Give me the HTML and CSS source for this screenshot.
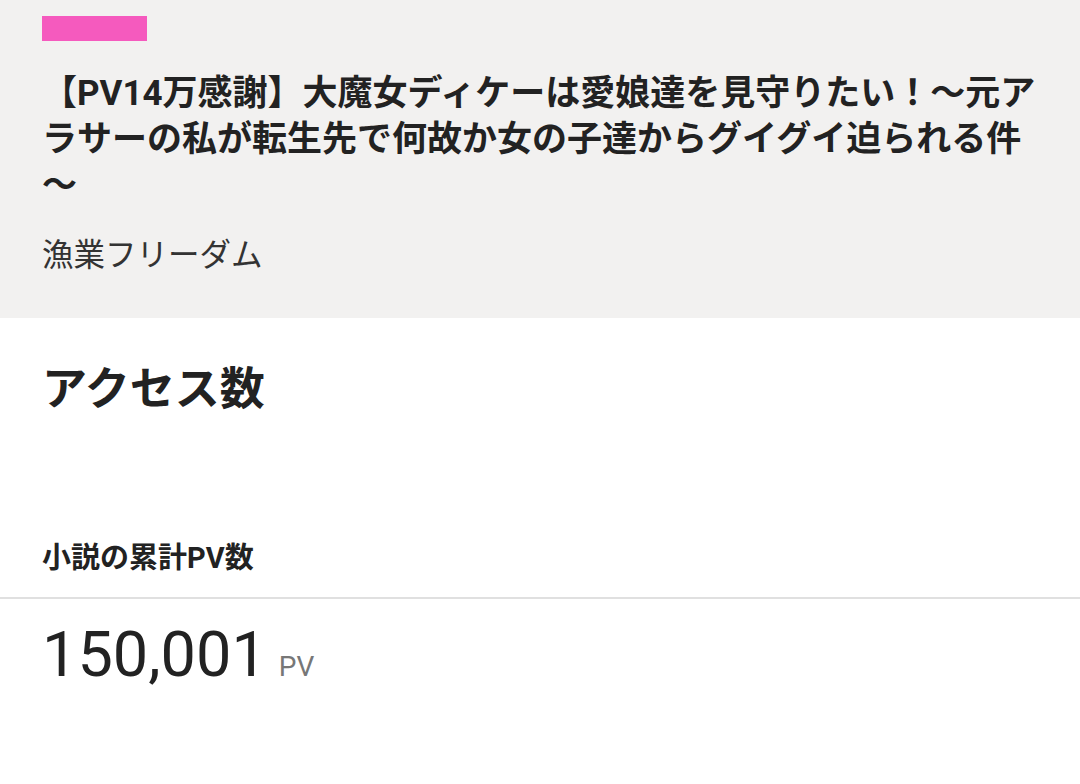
FILE: index.html
```html
<!DOCTYPE html>
<html lang="ja">
<head>
<meta charset="utf-8">
<link rel="stylesheet" href="styles.css">
</head>
<body>
<header class="novel-head">
  <div class="tag-bar"></div>
  <h1 class="novel-title">【PV14万感謝】大魔女ディケーは愛娘達を見守りたい！〜元アラサーの私が転生先で何故か女の子達からグイグイ迫られる件〜</h1>
  <p class="novel-author">漁業フリーダム</p>
</header>
<main class="access">
  <h2 class="access-title">アクセス数</h2>
  <h3 class="stat-label">小説の累計PV数</h3>
  <div class="stat-value"><span class="num">150,001</span><span class="unit">PV</span></div>
</main>
</body>
</html>
```
FILE: styles.css
```css
html, body {
  margin: 0;
  padding: 0;
  background: #ffffff;
  font-family: "Roboto", "Noto Sans CJK JP", sans-serif;
  color: #222222;
}

.novel-head {
  background: #f2f1f0;
  padding: 16px 42px 42px;
}

.tag-bar {
  width: 105px;
  height: 25px;
  background: #f55abe;
}

.novel-title {
  margin: 30px 0 0;
  font-size: 35px;
  line-height: 46px;
  font-weight: 700;
  color: #222222;
  line-break: anywhere;
}

.novel-author {
  margin: 27px 0 0;
  font-size: 31.5px;
  line-height: 40px;
  color: #333333;
}

.access {
  padding-top: 42px;
}

.access-title {
  margin: 0 42px;
  font-size: 45px;
  line-height: 60px;
  font-weight: 700;
  color: #222222;
}

.stat-label {
  margin: 118px 0 0;
  padding: 0 42px 19px;
  font-size: 29px;
  line-height: 40px;
  font-weight: 700;
  border-bottom: 2px solid #e0e0e0;
}

.stat-value {
  margin: 16px 42px 0;
  line-height: 80px;
  display: flex;
  align-items: baseline;
}

.num {
  font-size: 63px;
  color: #222222;
}

.unit {
  font-size: 28px;
  color: #777777;
  margin-left: 12px;
}
```
